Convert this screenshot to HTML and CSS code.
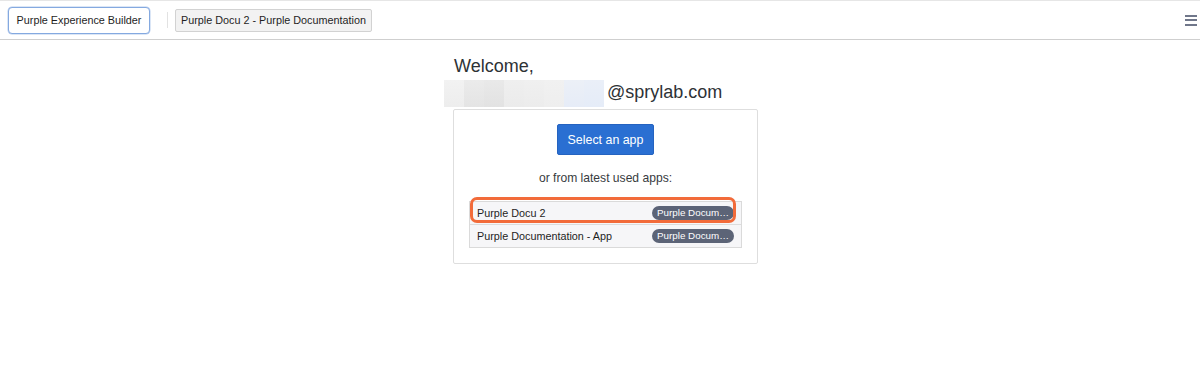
FILE: index.html
```html
<!DOCTYPE html>
<html>
<head>
<meta charset="utf-8">
<link rel="stylesheet" href="styles.css">
</head>
<body>
<header class="topbar">
  <button class="tb-btn tb-btn-active">Purple Experience Builder</button>
  <span class="tb-sep"></span>
  <button class="tb-btn tb-btn-app">Purple Docu 2 - Purple Documentation</button>
  <span class="tb-spacer"></span>
  <span class="hamburger"><span></span><span></span><span></span></span>
</header>
<main class="main">
  <div class="welcome">
    <div class="welcome-line">Welcome,</div>
    <div class="welcome-line email"><span class="blur"><i class="b1"></i><i class="b2"></i><i class="b3"></i><i class="b4"></i><i class="b5"></i><i class="b6"></i><i class="b7"></i><i class="b8"></i></span>@sprylab.com</div>
  </div>
  <div class="card">
    <button class="primary">Select an app</button>
    <p class="hint">or from latest used apps:</p>
    <div class="list">
      <div class="row"><span class="row-name">Purple Docu 2</span><span class="badge">Purple Docum…</span></div>
      <div class="row"><span class="row-name">Purple Documentation - App</span><span class="badge">Purple Docum…</span></div>
      <div class="highlight"></div>
    </div>
  </div>
</main>
</body>
</html>
```
FILE: styles.css
```css
* { box-sizing: border-box; }
html, body { margin: 0; padding: 0; background: #fff; }
body { font-family: "Liberation Sans", Arial, sans-serif; color: #333; }

.topbar {
  height: 40px;
  border-top: 1px solid #e6e6e6;
  border-bottom: 1px solid #cfcfcf;
  display: flex;
  align-items: center;
  padding: 0 3px 0 8px;
}
.tb-btn {
  font-family: "Liberation Sans", Arial, sans-serif;
  font-size: 10.8px;
  color: #1e1e1e;
  border-radius: 4px;
  padding: 0;
  white-space: nowrap;
  cursor: pointer;
}
.tb-btn-active {
  height: 27px;
  width: 142px;
  background: #fff;
  border: 1px solid #84a9e0;
  box-shadow: 0 0 0 0.5px #b8cdee;
}
.tb-sep {
  width: 1px;
  height: 16px;
  background: #e2e2e2;
  margin: 0 7px 0 17px;
}
.tb-btn-app {
  height: 23px;
  width: 197px;
  background: #f2f2f2;
  border: 1px solid #d2d2d2;
  border-radius: 2px;
}
.tb-spacer { flex: 1; }
.hamburger {
  width: 12px;
  display: flex;
  flex-direction: column;
  gap: 2.5px;
}
.hamburger span {
  display: block;
  height: 2px;
  background: #70778a;
}

.main {
  display: flex;
  flex-direction: column;
  align-items: center;
  padding-left: 11px;
  padding-top: 16px;
}
.welcome {
  width: 305px;
  padding-left: 1px;
  font-size: 18px;
  line-height: 21px;
  color: #2e3236;
}
.welcome-line { white-space: nowrap; }
.email { display: flex; align-items: center; }
.blur {
  display: inline-flex;
  width: 160px;
  height: 27px;
  margin-left: -10px;
  margin-right: 3px;
  margin-top: 3px;
}
.blur i { flex: 1; display: block; height: 100%; }
.b1 { background: linear-gradient(#f2f2f2, #ededed); }
.b2 { background: linear-gradient(#ebebeb, #e4e4e4); }
.b3 { background: linear-gradient(#e9e9e9, #e2e2e2); }
.b4 { background: linear-gradient(#efefef, #ebebeb); }
.b5 { background: linear-gradient(#f0f0f0, #ececec); }
.b6 { background: linear-gradient(#f1f1f1, #eeeeee); }
.b7 { background: linear-gradient(#ecf0f7, #e6ecf7); }
.b8 { background: linear-gradient(#eaeff8, #e5ecf8); }

.card {
  width: 305px;
  margin-top: 2px;
  border: 1px solid #dedede;
  border-radius: 2px;
  padding: 14px 15px 15px;
  display: flex;
  flex-direction: column;
  align-items: center;
}
.primary {
  width: 97px;
  height: 31px;
  padding: 0;
  white-space: nowrap;
  background: #2a6fd2;
  color: #fff;
  border: 1px solid #2563c0;
  border-radius: 2px;
  font-family: "Liberation Sans", Arial, sans-serif;
  font-size: 12.4px;
}
.hint {
  margin: 16px 0 0;
  font-size: 12.1px;
  line-height: 15px;
  color: #383b40;
}
.list {
  position: relative;
  align-self: stretch;
  margin-top: 15px;
  border: 1px solid #dadada;
}
.row {
  height: 22px;
  display: flex;
  align-items: center;
  justify-content: space-between;
  padding: 0 7px;
  background: #f6f6f8;
  font-size: 10.8px;
  color: #1e1e1e;
}
.row + .row { height: 23px; border-top: 1px solid #dcdcdc; }
.badge {
  width: 82px;
  height: 14px;
  border-radius: 7px;
  background: #5c6477;
  color: #fff;
  font-size: 9.8px;
  line-height: 14px;
  text-align: center;
  white-space: nowrap;
  overflow: hidden;
}
.highlight {
  position: absolute;
  left: 0;
  top: -5px;
  width: 266px;
  height: 26px;
  border: 3px solid #f26b3a;
  border-radius: 7px;
  pointer-events: none;
}
```
